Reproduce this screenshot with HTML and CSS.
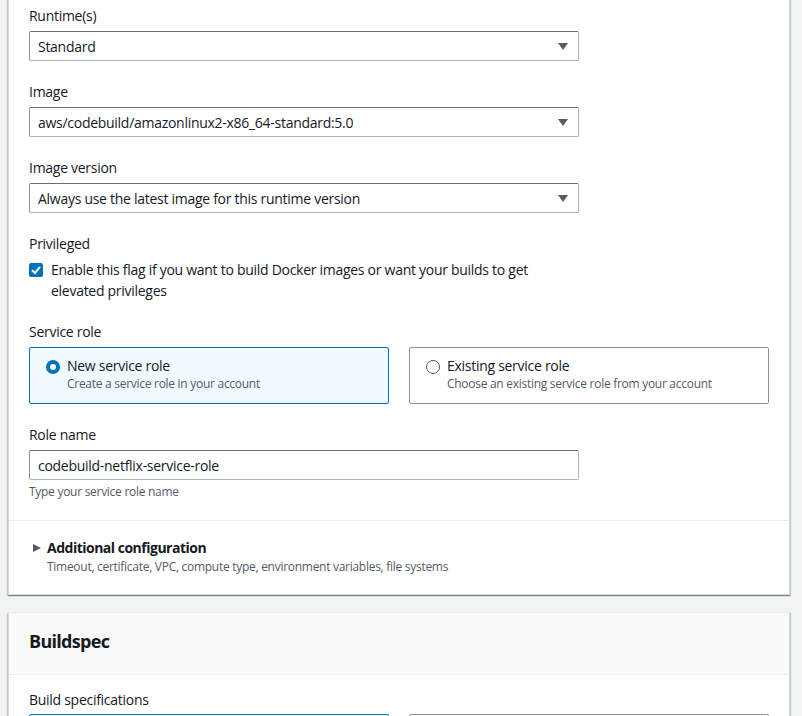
FILE: index.html
```html
<!DOCTYPE html>
<html>
<head>
<meta charset="utf-8">
<link rel="stylesheet" href="styles.css">
</head>
<body>
<div class="page">
  <section class="card card-top">
    <div class="body">
      <div class="field">
        <div class="label">Runtime(s)</div>
        <div class="select"><span>Standard</span><i class="caret"></i></div>
      </div>
      <div class="field">
        <div class="label">Image</div>
        <div class="select"><span>aws/codebuild/amazonlinux2-x86_64-standard:5.0</span><i class="caret"></i></div>
      </div>
      <div class="field">
        <div class="label">Image version</div>
        <div class="select"><span>Always use the latest image for this runtime version</span><i class="caret"></i></div>
      </div>
      <div class="field">
        <div class="label">Privileged</div>
        <div class="check-row">
          <span class="checkbox"><svg width="14" height="14" viewBox="0 0 14 14"><rect x="0" y="0" width="14" height="14" rx="2" fill="#0073bb"/><path d="M3 7.2 L6 10 L11 3.8" fill="none" stroke="#fff" stroke-width="2"/></svg></span>
          <span class="check-text">Enable this flag if you want to build Docker images or want your builds to get elevated privileges</span>
        </div>
      </div>
      <div class="field">
        <div class="label">Service role</div>
        <div class="tiles">
          <div class="tile selected">
            <span class="radio on"></span>
            <div>
              <div class="tile-title">New service role</div>
              <div class="tile-desc">Create a service role in your account</div>
            </div>
          </div>
          <div class="tile">
            <span class="radio"></span>
            <div>
              <div class="tile-title">Existing service role</div>
              <div class="tile-desc">Choose an existing service role from your account</div>
            </div>
          </div>
        </div>
      </div>
      <div class="field last">
        <div class="label">Role name</div>
        <div class="input">codebuild-netflix-service-role</div>
        <div class="hint">Type your service role name</div>
      </div>
    </div>
    <div class="expander">
      <div class="exp-title"><i class="tri"></i>Additional configuration</div>
      <div class="exp-desc">Timeout, certificate, VPC, compute type, environment variables, file systems</div>
    </div>
  </section>

  <section class="card">
    <div class="header"><h2>Buildspec</h2></div>
    <div class="body body2">
      <div class="label">Build specifications</div>
      <div class="tiles">
        <div class="tile selected short"></div>
        <div class="tile short"></div>
      </div>
    </div>
  </section>
</div>
</body>
</html>
```
FILE: styles.css
```css
* { box-sizing: border-box; }
html, body { margin: 0; padding: 0; }
body {
  background: #f2f3f3;
  font-family: "Open Sans", "Noto Sans", Arial, sans-serif;
  font-size: 14px;
  letter-spacing: -0.28px;
  color: #16191f;
  overflow: hidden;
  height: 716px;
}
.page {
  padding: 0 12px 0 8px;
  margin-top: -20px;
}
.card {
  background: #fff;
  border: 1px solid #d5dbdb;
  border-top: none;
  box-shadow: 0 1px 1px 0 rgba(0,28,36,.3), 1px 1px 1px 0 rgba(0,28,36,.15), -1px 1px 1px 0 rgba(0,28,36,.15);
  margin-bottom: 17px;
}
.body {
  padding: 25px 20px 20px 20px;
}
.field { margin-bottom: 20px; }
.field.last { margin-bottom: 0; }
.label {
  line-height: 22px;
  margin-bottom: 4px;
}
.select, .input {
  width: 550px;
  height: 30px;
  border: 1px solid #aab7b8;
  border-top-color: #687078;
  border-left-color: #879596;
  border-radius: 2px;
  display: flex;
  align-items: center;
  justify-content: space-between;
  padding: 0 10px 0 8px;
  background: #fff;
}
.caret {
  width: 0; height: 0;
  border-left: 5px solid transparent;
  border-right: 5px solid transparent;
  border-top: 7px solid #545b64;
}
.check-row {
  display: flex;
  align-items: flex-start;
  gap: 8px;
}
.checkbox { display: flex; margin-top: 4px; }
.check-text { width: 500px; line-height: 21px; }
.tiles {
  display: flex;
  gap: 20px;
}
.tile {
  width: 360px;
  height: 57px;
  border: 1px solid #879596;
  border-radius: 2px;
  display: flex;
  align-items: flex-start;
  gap: 7px;
  padding: 8px 16px 0 16px;
}
.tile.selected {
  background: #f1faff;
  border-color: #0073bb;
}
.radio {
  width: 14px; height: 14px;
  border-radius: 50%;
  border: 1px solid #545b64;
  margin-top: 4px;
  flex: none;
  background: #fff;
}
.radio.on {
  border: 4px solid #0073bb;
}
.tile-title { line-height: 20px; }
.tile-desc { font-size: 12px; line-height: 16px; color: #545b64; }
.hint { font-size: 12px; line-height: 16px; margin-top: 4px; color: #545b64; }
.expander {
  border-top: 1px solid #eaeded;
  padding: 16px 20px 19px 20px;
}
.exp-title {
  font-weight: bold;
  letter-spacing: -0.5px;
  line-height: 22px;
  display: flex;
  align-items: center;
}
.tri {
  width: 0; height: 0;
  border-top: 4.5px solid transparent;
  border-bottom: 4.5px solid transparent;
  border-left: 8px solid #545b64;
  margin: 0 6px 0 4px;
}
.exp-desc {
  font-size: 12px;
  line-height: 16px;
  padding-left: 18px;
  color: #545b64;
}
.card + .card { border-top: 1px solid #eaeded; }
.header {
  background: #fafafa;
  border-bottom: 1px solid #eaeded;
  height: 62px;
  padding: 15px 20px 17px;
}
.header h2 {
  margin: 0;
  font-size: 18px;
  line-height: 26px;
  font-weight: bold;
  letter-spacing: -0.7px;
}
.body2 { padding-top: 14px; }
.body2 .label { margin-bottom: 3px; }
.tile.short { height: 40px; }
```
